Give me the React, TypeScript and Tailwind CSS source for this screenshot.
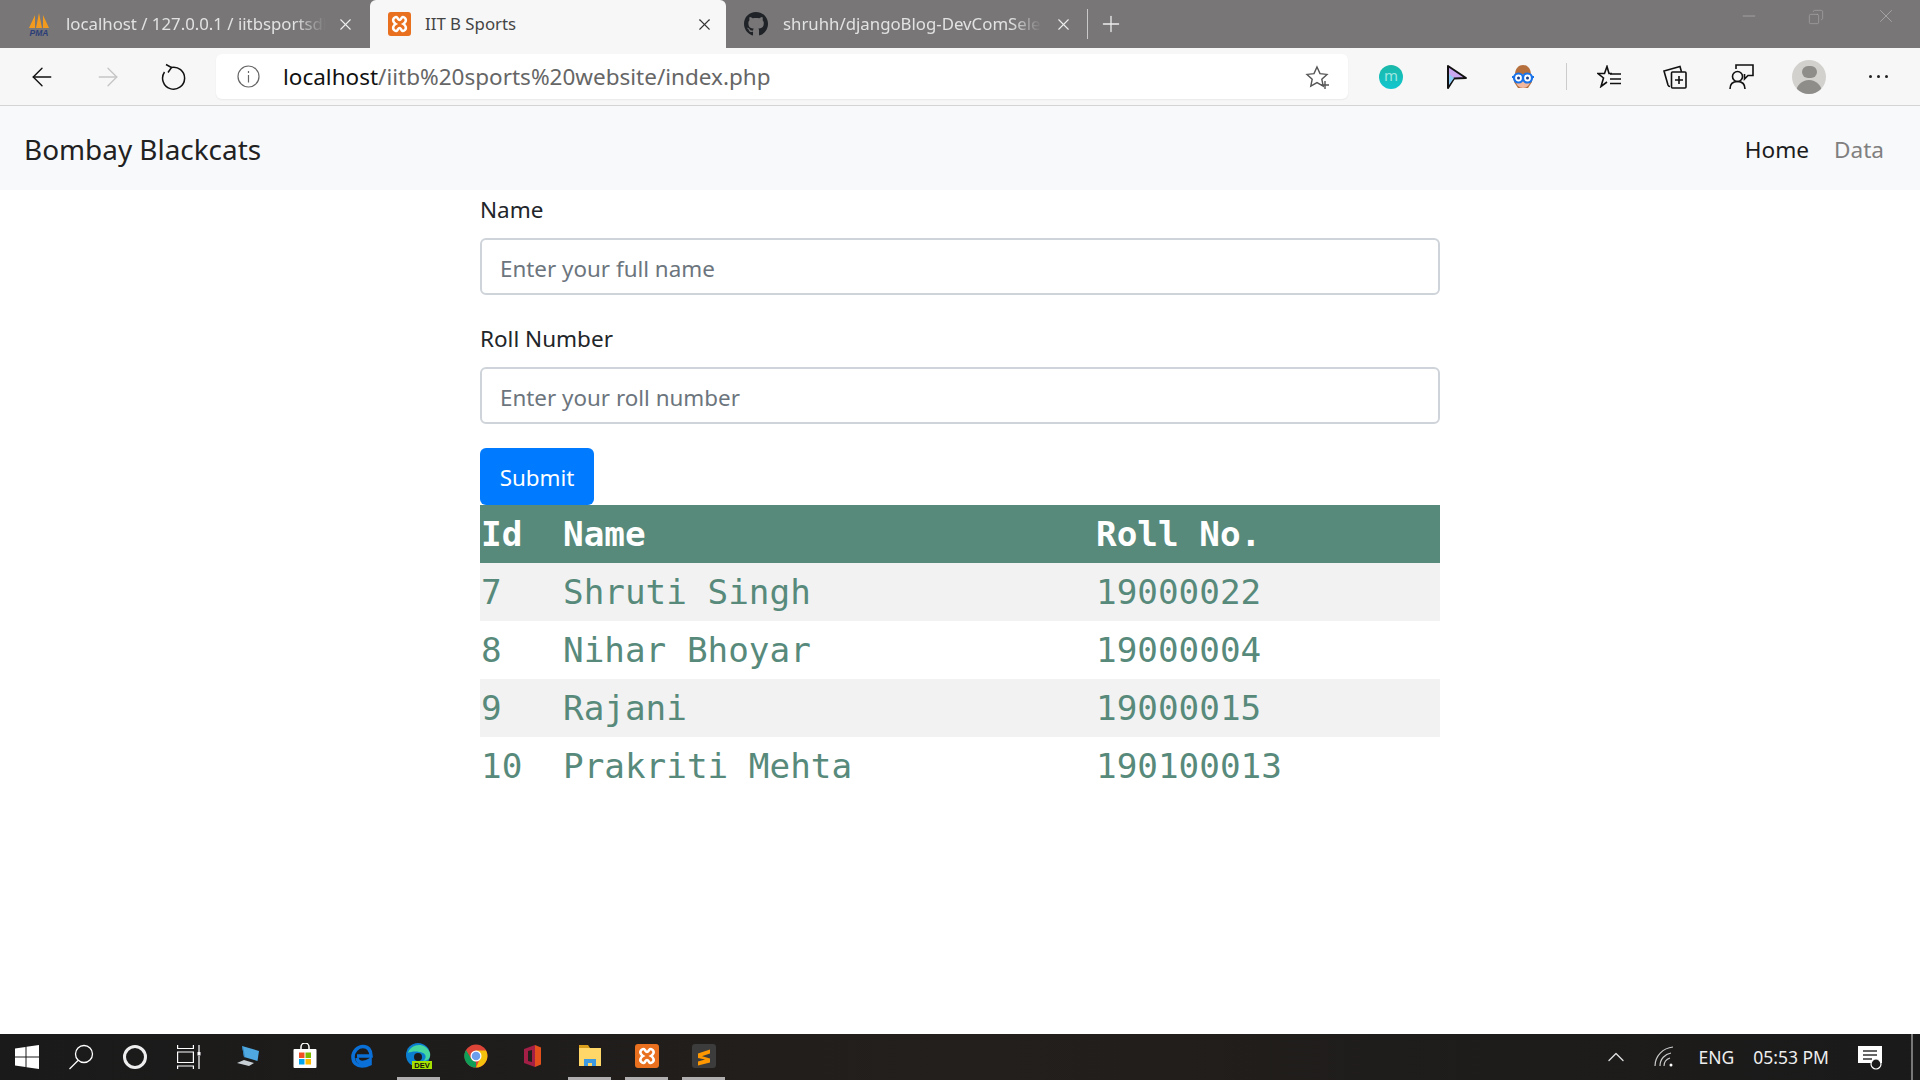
import { ArrowLeft, ArrowRight, Minus, Plus, X, ChevronUp, Copy } from "lucide-react";
import { FaGithub } from "react-icons/fa";

const sans = "font-['Noto_Sans','Open_Sans',sans-serif]";

const rows = [
  { id: 7, name: "Shruti Singh", roll: "19000022" },
  { id: 8, name: "Nihar Bhoyar", roll: "19000004" },
  { id: 9, name: "Rajani", roll: "19000015" },
  { id: 10, name: "Prakriti Mehta", roll: "190100013" },
];

function XamppIcon({ size = 24, h = 24 }: { size?: number; h?: number }) {
  return (
    <svg width={size} height={h} viewBox="0 0 24 24" preserveAspectRatio="none">
      <rect width="24" height="24" rx="3" fill="#e8701f" />
      <path d="M7 5.500c3-2 3 2.500 5 2.500s2-4.500 5-2.500 1.500 5-1 6.500c2.500 1.500 4 4.500 1 6.500s-3-2.500-5-2.500-2 4.500-5 2.500-1.500-5 1-6.500c-2.500-1.500-4-4.500-1-6.500z" fill="none" stroke="#fff" strokeWidth="2.600" />
    </svg>
  );
}

function PmaIcon() {
  return (
    <svg width="24" height="24" viewBox="0 0 24 24">
      <path d="M2 16 8 3v13zM9 16l3-15 3 15zM16 16V3l6 13z" fill="#f29a1d" />
      <text x="12" y="23.500" textAnchor="middle" fontSize="8.500" fontWeight="700" fontStyle="italic" fill="#2c3e78" fontFamily="Liberation Sans">PMA</text>
    </svg>
  );
}

function Tab({ title, active, w, pr, fade, icon }: { title: string; active?: boolean; w: string; pr: string; fade?: string; icon: React.ReactNode }) {
  return (
    <div className={`${w} ${pr} h-12 flex items-center shrink-0 ${active ? "pl-[17px] bg-[#f7f7f7] rounded-t-[6px] text-[#444]" : "pl-[18px] text-[#e2e2e2]"}`}>
      <div className="w-[24px] h-[24px] flex items-center justify-center shrink-0">{icon}</div>
      <div className={`flex-1 overflow-hidden whitespace-nowrap text-[16.8px] ${active ? "ml-[14px]" : "ml-[15px]"} ${fade ?? ""}`}>{title}</div>
      <X size={19} strokeWidth={1.4} className={active ? "text-[#333]" : "text-[#eee]"} />
    </div>
  );
}

function ToolCell({ children, w = "w-[66px]" }: { children: React.ReactNode; w?: string }) {
  return <div className={`${w} h-full flex items-center justify-center shrink-0`}>{children}</div>;
}

function TaskCell({ children, on }: { children: React.ReactNode; on?: boolean }) {
  return (
    <div className="w-[57px] h-full flex flex-col items-center shrink-0">
      <div className="flex-1 flex items-center justify-center">{children}</div>
      <div className={`w-[43px] h-[3px] ${on ? "bg-[#b0aeae]" : ""}`} />
    </div>
  );
}

function Field({ label, placeholder }: { label: string; placeholder: string }) {
  return (
    <div className="mb-[25px]">
      <label className="block text-[22.5px] leading-[38px] text-[#212529] mb-[9px]">{label}</label>
      <input
        placeholder={placeholder}
        className="block w-full h-[57px] px-[18px] pt-[3px] text-[22.4px] bg-white border-2 border-[#ced4da] rounded-[6px] placeholder:text-[#6c757d]"
      />
    </div>
  );
}

export default function App() {
  return (
    <div className={`h-[1080px] w-[1920px] overflow-hidden flex flex-col bg-white ${sans}`}>
      {/* tabs */}
      <div className="h-12 bg-[#787676] flex items-start pl-[9px] shrink-0">
        <Tab
          w="w-[361px]"
          pr="pr-[15px]"
          fade="mr-[10px] [mask-image:linear-gradient(to_right,black_88%,transparent)]"
          title="localhost / 127.0.0.1 / iitbsportsdb"
          icon={<PmaIcon />}
        />
        <Tab w="w-[356px]" pr="pr-[12px]" active title="IIT B Sports" icon={<XamppIcon size={23} />} />
        <Tab
          w="w-[356px]"
          pr="pr-[9px]"
          fade="mr-[12px] [mask-image:linear-gradient(to_right,black_88%,transparent)]"
          title="shruhh/djangoBlog-DevComSelect"
          icon={<FaGithub size={26} className="text-[#1f2328]" />}
        />
        <div className="w-px h-[30px] bg-[#c9c9c9] mt-[9px] ml-[5px]" />
        <Plus size={26} strokeWidth={1.2} className="text-[#eee] mt-[11px] ml-[10px]" />
        <div className="flex-1" />
        <div className="flex items-start text-[#a9a7a7] mt-[4px] mr-[23px]">
          <Minus size={20} strokeWidth={1} className="mt-[2px]" />
          <Copy size={16} strokeWidth={1} className="ml-[49px] mt-[5px] -scale-x-100" />
          <X size={22} strokeWidth={1} className="ml-[51px] mt-[1px]" />
        </div>
      </div>

      {/* toolbar */}
      <div className="h-[58px] bg-[#f7f7f7] border-b border-[#d4d4d4] flex items-center pl-[9px] shrink-0">
        <ToolCell><ArrowLeft size={30} strokeWidth={1.1} className="text-[#111]" /></ToolCell>
        <ToolCell><ArrowRight size={30} strokeWidth={1.1} className="text-[#c6c6c6]" /></ToolCell>
        <ToolCell>
          <svg width="26" height="28" viewBox="0 0 26 28" fill="none" stroke="#111" strokeWidth="1.500">
            <path d="M10 4.500A11 11 0 1 1 3.500 9" />
            <path d="M5 1.500l5.500 3-3.500 5" />
          </svg>
        </ToolCell>
        <div className="ml-[9px] w-[1132px] h-[45px] bg-white rounded-[6px] shadow-[0_1px_2px_rgba(0,0,0,0.06)] flex items-center pl-[21px] pr-[17px]">
          <svg width="23" height="23" viewBox="0 0 23 23" fill="none" stroke="#666" strokeWidth="1.200">
            <circle cx="11.500" cy="11.500" r="10.500" />
            <path d="M11.500 10v7.500M11.500 6v2" />
          </svg>
          <div className="ml-[23px] flex-1 text-[22.5px] whitespace-nowrap pt-px">
            <span className="text-[#111]">localhost</span>
            <span className="text-[#666]">/iitb%20sports%20website/index.php</span>
          </div>
          <svg width="26" height="26" viewBox="0 0 26 26" fill="none" stroke="#555" strokeWidth="1.400">
            <path d="M12 3l3 6.600 7 .8-5.200 4.800 1.400 7L12 18.600 5.800 22.200l1.400-7L2 10.400l7-.8z" />
            <path d="M16 21h8M20 17v8" />
          </svg>
        </div>
        <div className="w-[10px] shrink-0" />
        <ToolCell>
          <div className="w-[24px] h-[24px] rounded-full bg-gradient-to-b from-[#1bb8a8] to-[#10c6cf] flex items-center justify-center text-[#9ee7e1] text-[15px] leading-none pb-[2px]">m</div>
        </ToolCell>
        <ToolCell>
          <svg width="22" height="26" viewBox="0 0 22 26">
            <path d="M2 2l18 12-12 .5L2 24z" fill="#c9a8f0" stroke="#111" strokeWidth="2" strokeLinejoin="round" />
            <path d="M3 10l5 4-5 7z" fill="#8ecbf5" />
          </svg>
        </ToolCell>
        <ToolCell>
          <svg width="24" height="26" viewBox="0 0 24 26">
            <path d="M4 11C4 4 8 1 12 1s8 3 8 10l1 7-4 6H7l-4-6z" fill="#b5703d" />
            <circle cx="12" cy="17" r="7" fill="#f3b9a0" />
            <path d="M1 13h22" stroke="#1a73e8" strokeWidth="2" />
            <circle cx="7.500" cy="14" r="4.500" fill="#fff" stroke="#1a73e8" strokeWidth="2.200" />
            <circle cx="16.500" cy="14" r="4.500" fill="#fff" stroke="#1a73e8" strokeWidth="2.200" />
            <circle cx="7.500" cy="14" r="1.500" fill="#1a3e8a" />
            <circle cx="16.500" cy="14" r="1.500" fill="#1a3e8a" />
          </svg>
        </ToolCell>
        <ToolCell w="w-[20px]"><div className="w-px h-[27px] bg-[#ccc]" /></ToolCell>
        <ToolCell>
          <svg width="24" height="23" viewBox="0 0 24 23" fill="none" stroke="#111" strokeWidth="1.600">
            <path d="M15 8.500h-3L10 1.500 7.500 8.500H1l5.500 4.500L4 21.500l6-4.500" />
            <path d="M13 9h11M13 14h11M13 18.500h11" />
          </svg>
        </ToolCell>
        <ToolCell>
          <svg width="24" height="24" viewBox="0 0 24 24" fill="none" stroke="#111" strokeWidth="1.600">
            <path d="M7 21.500Q5.500 21.500 5 20L1 6 17 1.500 18.500 7" />
            <rect x="8.500" y="7" width="14.500" height="16" rx="1" fill="#f7f7f7" />
            <path d="M16 11v8M12 15h8" />
          </svg>
        </ToolCell>
        <ToolCell>
          <svg width="25" height="25" viewBox="0 0 25 25" fill="none" stroke="#111" strokeWidth="1.600">
            <path d="M7 5V1h17v10.500h-5l-3.500 3.500v-5" />
            <circle cx="8.500" cy="12.500" r="5" />
            <path d="M1 25c0-5 3-7.500 7.500-7.500S16 20 16 25" />
          </svg>
        </ToolCell>
        <div className="w-[2px] shrink-0" />
        <ToolCell>
          <div className="w-[34px] h-[34px] rounded-full bg-[#d2d1ce] overflow-hidden flex flex-col items-center">
            <div className="w-[15px] h-[15px] rounded-full bg-[#8f8d8a] mt-[6px]" />
            <div className="w-[26px] h-[16px] rounded-t-full bg-[#8f8d8a] mt-[2px]" />
          </div>
        </ToolCell>
        <div className="w-[3px] shrink-0" />
        <ToolCell>
          <div className="flex gap-[5px]">
            <div className="w-[3px] h-[3px] rounded-full bg-[#222]" />
            <div className="w-[3px] h-[3px] rounded-full bg-[#222]" />
            <div className="w-[3px] h-[3px] rounded-full bg-[#222]" />
          </div>
        </ToolCell>
      </div>

      {/* navbar */}
      <nav className="h-[84px] bg-[#f8f9fa] flex items-center pl-[24px] pr-[36px] pt-[3px] shrink-0">
        <div className="text-[27.9px] text-[#212121]">Bombay Blackcats</div>
        <div className="flex-1" />
        <a className="text-[22.6px] text-[#1c1c1c]">Home</a>
        <a className="text-[22.6px] text-[#808080] ml-[25px]">Data</a>
      </nav>

      {/* main */}
      <main className="flex-1 w-[960px] mx-auto pt-px">
        <Field label="Name" placeholder="Enter your full name" />
        <Field label="Roll Number" placeholder="Enter your roll number" />
        <button className="block -mt-px w-[114px] h-[57px] pt-[3px] bg-[#007bff] text-white text-[22.4px] rounded-[6px]">Submit</button>
        <table className="w-full table-fixed font-['DejaVu_Sans_Mono',monospace] text-[34.3px] text-left border-collapse">
          <colgroup>
            <col className="w-[83px]" />
            <col className="w-[533px]" />
            <col />
          </colgroup>
          <thead>
            <tr className="h-[58px] bg-[#588a7b] text-white">
              <th className="pl-px pt-[2px] font-bold">Id</th>
              <th className="pt-[2px] font-bold">Name</th>
              <th className="pt-[2px] font-bold">Roll No.</th>
            </tr>
          </thead>
          <tbody className="text-[#588a7b]">
            {rows.map((r, i) => (
              <tr key={r.id} className={`h-[58px] ${i % 2 === 0 ? "bg-[#f2f2f2]" : "bg-white"}`}>
                <td className="pl-px pt-[2px]">{r.id}</td>
                <td className="pt-[2px]">{r.name}</td>
                <td className="pt-[2px]">{r.roll}</td>
              </tr>
            ))}
          </tbody>
        </table>
      </main>

      {/* taskbar */}
      <footer className="h-[46px] bg-gradient-to-r from-[#1a1a1a] via-[#231f1c] to-[#1a1a1a] flex items-center shrink-0 text-white">
        <ToolCell w="w-[54px]">
          <svg width="24" height="24" viewBox="0 0 24 24" fill="#fff">
            <path d="M0 3.500l10.500-1.500v9.500H0zM11.500 1.800 24 0v11.500H11.500zM0 12.500h10.500V22L0 20.500zM11.500 12.500H24V24l-12.500-1.800z" />
          </svg>
        </ToolCell>
        <ToolCell w="w-[54px]">
          <svg width="26" height="26" viewBox="0 0 26 26" fill="none" stroke="#fff" strokeWidth="1.300">
            <circle cx="16" cy="10" r="8.500" />
            <path d="M10 16.500 1.500 25" />
          </svg>
        </ToolCell>
        <ToolCell w="w-[54px]"><div className="w-[24px] h-[24px] rounded-full border-[3px] border-[#eee]" /></ToolCell>
        <ToolCell w="w-[54px]">
          <svg width="24" height="24" viewBox="0 0 24 24" fill="none" stroke="#fff" strokeWidth="1.200">
            <path d="M.6 0v3.500h15.800V0M.6 7h15.800v10.500H.6zM.6 24v-3h15.800v3M22 0v7M22 11v13" />
            <rect x="20.500" y="7" width="3" height="3.500" fill="#fff" stroke="none" />
          </svg>
        </ToolCell>
        <div className="w-[3px] shrink-0" />
        <TaskCell>
          <svg width="24" height="24" viewBox="0 0 24 24">
            <path d="M6 2l17 5-1.500 10L8 13z" fill="#4fa8e0" />
            <path d="M6 2l2 11 1 .3L7 2.300z" fill="#2f80b8" />
            <path d="M1 19l7-3 10 3-5 3z" fill="#c8d0d6" />
          </svg>
        </TaskCell>
        <TaskCell>
          <svg width="24" height="26" viewBox="0 0 24 26">
            <path d="M8 7V4a4 4 0 0 1 8 0v3" fill="none" stroke="#fff" strokeWidth="1.500" />
            <rect x=".5" y="6" width="23" height="19" rx="1" fill="#fff" />
            <rect x="6" y="9.500" width="5.500" height="5.500" fill="#f25022" />
            <rect x="12.500" y="9.500" width="5.500" height="5.500" fill="#7fba00" />
            <rect x="6" y="16" width="5.500" height="5.500" fill="#00a4ef" />
            <rect x="12.500" y="16" width="5.500" height="5.500" fill="#ffb900" />
          </svg>
        </TaskCell>
        <TaskCell>
          <svg width="22" height="24" viewBox="0 0 22 24" fill="none">
            <path d="M6 12h14c0-6-3-9.500-8-9.500S2 7 2 13c0 6 4 9 9 9 3 0 6-1 8-2v-4c-2 1.500-5 2.500-7.500 2.500-3 0-5-1.500-5.500-4.500" stroke="#0a6fd6" strokeWidth="3.600" />
          </svg>
        </TaskCell>
        <TaskCell on>
          <svg width="26" height="26" viewBox="0 0 26 26">
            <circle cx="12" cy="12" r="12" fill="#0c7ed0" />
            <path d="M2 10C5 0 20-1 24 10c1 5-2 8-7 8 3-2 4-6 0-8-5-2-11-2-15 0z" fill="#46d6a0" />
            <circle cx="12" cy="14" r="4" fill="#1b1b1b" />
            <rect x="6" y="18" width="20" height="8" fill="#a5e000" />
            <text x="16" y="25" textAnchor="middle" fontSize="7.500" fontWeight="700" fill="#111" fontFamily="Liberation Sans">DEV</text>
          </svg>
        </TaskCell>
        <TaskCell>
          <svg width="24" height="24" viewBox="0 0 24 24">
            <circle cx="12" cy="12" r="11.500" fill="#db4437" />
            <path d="M12 23.500A11.500 11.500 0 0 1 2 6l6 10 4 2z" fill="#0f9d58" />
            <path d="M12 23.500A11.500 11.500 0 0 0 22 6.500H12l4 8z" fill="#f4c20d" />
            <circle cx="12" cy="12" r="5.500" fill="#fff" />
            <circle cx="12" cy="12" r="4.300" fill="#6d9eeb" />
          </svg>
        </TaskCell>
        <TaskCell>
          <svg width="20" height="24" viewBox="0 0 20 24">
            <path d="M1 5l11-4v22L1 19z" fill="#a31f45" />
            <path d="M12 1l6 2.500v17L12 23z" fill="#e3501c" />
            <path d="M5 7l4-1v12l-4-1z" fill="#231f1c" />
          </svg>
        </TaskCell>
        <TaskCell on>
          <svg width="24" height="24" viewBox="0 0 24 24">
            <path d="M1 1h9l2 3H1z" fill="#d99e1c" />
            <rect x="1" y="4" width="22" height="18" fill="#ffd768" />
            <path d="M6 15h12v7h-4v-3h-4v3H6z" fill="#3d9ae0" />
          </svg>
        </TaskCell>
        <TaskCell on><XamppIcon size={24} h={24} /></TaskCell>
        <TaskCell on>
          <svg width="24" height="24" viewBox="0 0 24 24">
            <rect width="24" height="24" rx="3" fill="#3c3c3c" />
            <path d="M6 9.500l12-4v4l-12 4zM6 11l12 3.500v4l-12 3v-4l7-2-7-1.500z" fill="#ff9800" />
          </svg>
        </TaskCell>
        <div className="flex-1" />
        <ChevronUp size={28} strokeWidth={1.200} className="text-[#ddd]" />
        <svg width="22" height="22" viewBox="0 0 22 22" fill="none" stroke="#ccc" strokeWidth="1.200" className="ml-[24px]">
          <path d="M1 20C1 10 9 2 19 1M6 20c0-7 5-12 11-13M10 20c0-4 3-7 6-8" />
          <circle cx="17" cy="19" r="1.500" fill="#fff" stroke="none" />
        </svg>
        <div className="ml-[22px] text-[17.5px] text-[#eee]">ENG</div>
        <div className="ml-[19px] text-[17.5px] text-[#eee]">05:53 PM</div>
        <svg width="26" height="26" viewBox="0 0 26 26" className="ml-[28px]">
          <path d="M1 2h24v17h-2l-3 5-3-5H1z" fill="#fff" />
          <path d="M6 7h14M6 11h14M6 15h9" stroke="#333" strokeWidth="1.300" />
          <circle cx="19" cy="20" r="5" fill="#1b1b1b" stroke="#fff" strokeWidth="1.200" />
        </svg>
        <div className="ml-[28px] w-[2px] h-full bg-[#777]" />
        <div className="w-[7px]" />
      </footer>
    </div>
  );
}
